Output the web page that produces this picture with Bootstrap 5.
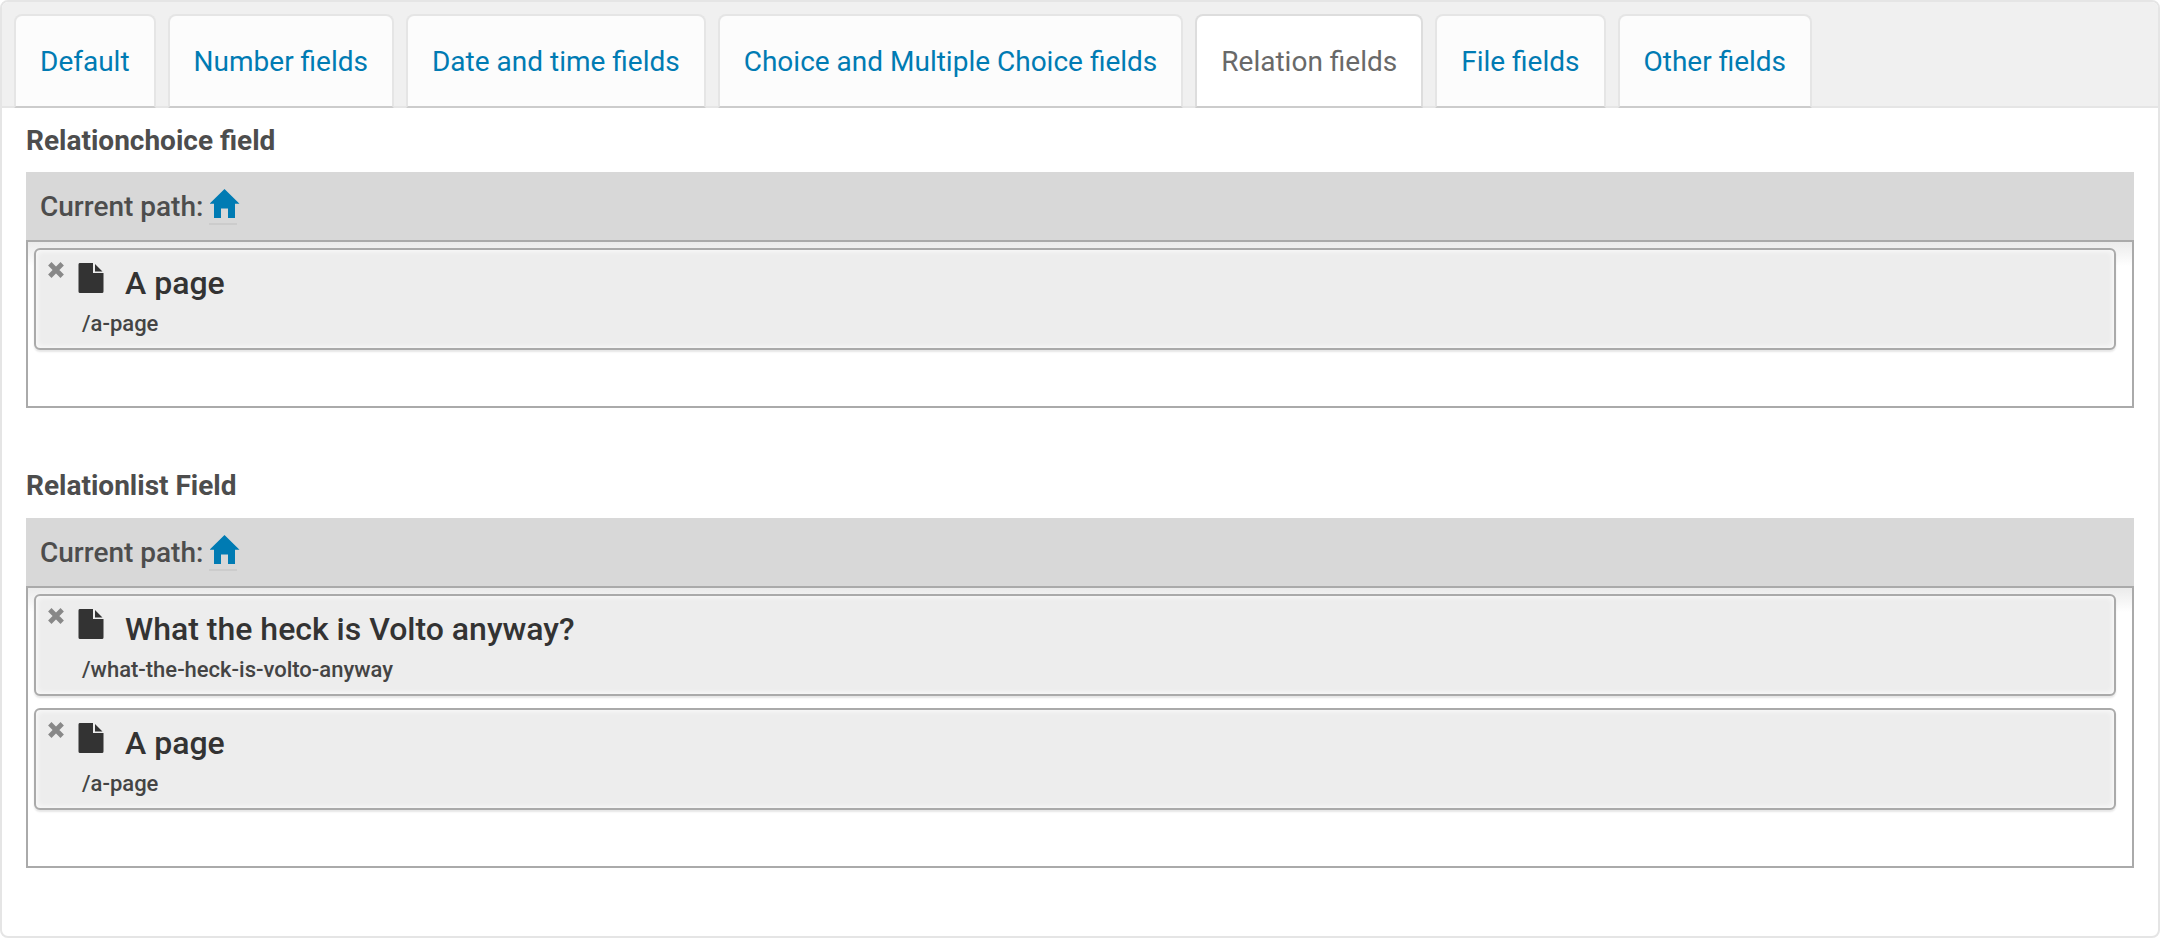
<!DOCTYPE html>
<html lang="en">
<head>
<meta charset="utf-8">
<meta name="viewport" content="width=device-width, initial-scale=1">
<title>Relation fields</title>
<link href="https://cdn.jsdelivr.net/npm/bootstrap@5.3.0/dist/css/bootstrap.min.css" rel="stylesheet">
<style>
  body { font-family: Roboto, "Liberation Sans", sans-serif; font-size: 28px; line-height: 36px; color: #4d4d4d; background: #fff; }
  .form-panel { border: 2px solid #e5e5e5; border-radius: 8px; overflow: hidden; }
  .tab-bar { background: #f0f0f0; padding: 12px 12px 0; gap: 12px; border-bottom: 2px solid #e5e5e5; }
  .tab-bar .nav-item { margin-bottom: -2px; }
  .tab-bar .nav-link { background: #fcfcfc; color: #007bb3; border: 2px solid #e5e5e5; border-bottom-color: #ccc; border-radius: 8px 8px 0 0; margin: 0; padding: 28px 24px 26px; }
  .tab-bar .nav-link.active { background: #fff; color: #696969; border-color: #ddd #ddd #ccc; }
  .tab-body { padding: 15px 24px 68px; }
  .field-group + .field-group { margin-top: 60px; }
  .field-name { font-size: 28px; line-height: 36px; font-weight: 700; margin-bottom: 13px; }
  .field-group + .field-group .field-name { margin-bottom: 14px; }
  .path-bar { background: #d8d8d8; padding: 15px 14px 13px; font-weight: 500; line-height: 40px; gap: 6px; }
  .home-link { border-bottom: 2px solid #ccc; width: 28px; height: 38px; color: #007bb3; }
  .home-link svg { width: 30px; height: 30px; margin: 2px 0 0 1px; }
  .picked-list { border: 2px solid #aaa; padding: 6px 16px 56px 6px; gap: 12px; background: linear-gradient(#ebebeb, #fff 24px); }
  .picked-item { background: #ededed; border: 2px solid #aaa; border-radius: 6px; box-shadow: 0 2px 2px #0000001a, inset 0 0 6px #fff; height: 102px; padding: 12px; color: #333; }
  .remove-btn { width: 16px; height: 16px; color: #888; }
  .page-icon { width: 26px; height: 31px; margin: 1px 0 0 14px; }
  .picked-title { font-size: 32px; line-height: 42px; font-weight: 500; margin-left: 21px; }
  .picked-path { font-size: 22px; line-height: 28px; font-weight: 500; color: #444; margin: 6px 0 0 34px; }
</style>
</head>
<body>
<svg class="d-none" xmlns="http://www.w3.org/2000/svg">
  <symbol id="home-icon" viewBox="0 0 30 30"><path d="M14.500 0 29.500 14.700H25V29H18V19.500H11V29H4V14.700H-.5Z" fill="currentColor"/></symbol>
  <symbol id="page-icon" viewBox="0 0 26 31"><path d="M1.500 0H15V10H25.500V28.500Q25.500 30 24 30H2Q.5 30 .5 28.500V1.500Q.5 0 1.500 0ZM17 1 24.500 8.500H17Z" fill="currentColor"/></symbol>
  <symbol id="cross-icon" viewBox="0 0 16 16"><path d="M1.800 1.800 14.200 14.200M14.200 1.800 1.800 14.200" stroke="currentColor" stroke-width="4.800" fill="none"/></symbol>
</svg>
<main class="form-panel">
  <ul class="nav tab-bar">
    <li class="nav-item"><a class="nav-link" href="#default">Default</a></li>
    <li class="nav-item"><a class="nav-link" href="#number">Number fields</a></li>
    <li class="nav-item"><a class="nav-link" href="#date">Date and time fields</a></li>
    <li class="nav-item"><a class="nav-link" href="#choice">Choice and Multiple Choice fields</a></li>
    <li class="nav-item"><a class="nav-link active" aria-current="page" href="#relation">Relation fields</a></li>
    <li class="nav-item"><a class="nav-link" href="#file">File fields</a></li>
    <li class="nav-item"><a class="nav-link" href="#other">Other fields</a></li>
  </ul>
  <div class="tab-body">
    <section class="field-group">
      <h2 class="field-name">Relationchoice field</h2>
      <div class="path-bar d-flex"><span>Current path:</span><a class="home-link d-block" href="#home" aria-label="Home"><svg class="d-block"><use href="#home-icon"/></svg></a></div>
      <ul class="picked-list list-unstyled d-flex flex-column mb-0">
        <li class="picked-item">
          <div class="d-flex align-items-start">
            <button type="button" class="remove-btn btn p-0 border-0 d-flex" aria-label="Remove"><svg width="16" height="16"><use href="#cross-icon"/></svg></button>
            <svg class="page-icon"><use href="#page-icon"/></svg>
            <span class="picked-title">A page</span>
          </div>
          <div class="picked-path">/a-page</div>
        </li>
      </ul>
    </section>
    <section class="field-group">
      <h2 class="field-name">Relationlist Field</h2>
      <div class="path-bar d-flex"><span>Current path:</span><a class="home-link d-block" href="#home" aria-label="Home"><svg class="d-block"><use href="#home-icon"/></svg></a></div>
      <ul class="picked-list list-unstyled d-flex flex-column mb-0">
        <li class="picked-item">
          <div class="d-flex align-items-start">
            <button type="button" class="remove-btn btn p-0 border-0 d-flex" aria-label="Remove"><svg width="16" height="16"><use href="#cross-icon"/></svg></button>
            <svg class="page-icon"><use href="#page-icon"/></svg>
            <span class="picked-title">What the heck is Volto anyway?</span>
          </div>
          <div class="picked-path">/what-the-heck-is-volto-anyway</div>
        </li>
        <li class="picked-item">
          <div class="d-flex align-items-start">
            <button type="button" class="remove-btn btn p-0 border-0 d-flex" aria-label="Remove"><svg width="16" height="16"><use href="#cross-icon"/></svg></button>
            <svg class="page-icon"><use href="#page-icon"/></svg>
            <span class="picked-title">A page</span>
          </div>
          <div class="picked-path">/a-page</div>
        </li>
      </ul>
    </section>
  </div>
</main>
<script src="https://cdn.jsdelivr.net/npm/bootstrap@5.3.0/dist/js/bootstrap.bundle.min.js"></script>
</body>
</html>
